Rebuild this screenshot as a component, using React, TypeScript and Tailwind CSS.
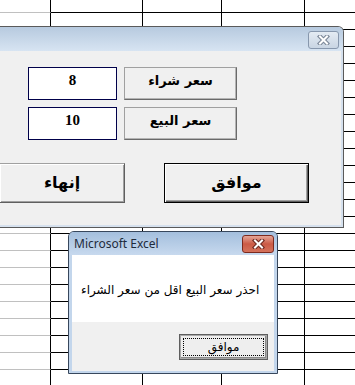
import React from "react";

const ROWS = 23;

function Sheet() {
  return (
    <div className="flex flex-col w-[355px] h-[385px] overflow-hidden bg-white">
      {Array.from({ length: ROWS }).map((_, i) => (
        <div key={i} className={i === 0 ? "flex h-[13px] shrink-0" : "flex h-[17px] shrink-0"}>
          <div className="w-[51px] border-r border-b border-r-black border-b-[#c0c0c0]" />
          <div className="w-[92px] border-r border-b border-black" />
          <div className="w-[79px] border-r border-b border-black" />
          <div className="w-[83px] border-r border-b border-black" />
          <div className="flex-1 border-b border-black" />
        </div>
      ))}
    </div>
  );
}

function XGlyph({ outline }: { outline: string }) {
  return (
    <svg width="13" height="10" viewBox="0 0 13 10">
      <path d="M3 1.5 L10 8.5 M10 1.5 L3 8.5" stroke={outline} strokeWidth="4.2" strokeLinecap="square" fill="none" />
      <path d="M3 1.5 L10 8.5 M10 1.5 L3 8.5" stroke="#ffffff" strokeWidth="2" strokeLinecap="square" fill="none" />
    </svg>
  );
}

const arabic = { fontFamily: '"DejaVu Sans", sans-serif' };

function UserForm() {
  return (
    <div className="absolute left-0 top-[26px] w-[344px] h-[202px] border-t border-r border-b border-[#5a5a5a] rounded-tr-[6px] overflow-hidden bg-[#d6e1ee] flex flex-col">
      <div className="h-[24px] shrink-0 flex justify-end items-start pt-[4px] pr-[4px] bg-linear-to-b from-[#b7cadf] to-[#d7e4f2]">
        <div className="w-[31px] h-[18px] rounded-[3px] border border-[#8797ad] bg-linear-to-b from-[#e4ebf3] to-[#c9d5e3] flex items-center justify-center">
          <XGlyph outline="#7b8798" />
        </div>
      </div>
      <div className="flex-1 bg-[#f0f0f0] mr-[2px] mb-[2px] flex flex-col pt-[16px]">
        {[
          ["8", "سعر شراء"],
          ["10", "سعر البيع"],
        ].map(([v, l], i) => (
          <div key={i} className={i === 0 ? "flex gap-[7px] pl-[28px]" : "flex gap-[7px] pl-[28px] mt-[7px]"}>
            <div
              className="w-[89px] h-[33px] bg-white border border-[#00004a] flex items-center justify-center pb-[6px] font-bold text-[15px] text-black"
              style={{ fontFamily: '"Liberation Serif", serif' }}
            >
              {v}
            </div>
            <div
              dir="rtl"
              className="w-[113px] h-[33px] border border-[#a0a0a0] border-r-[#6a6a6a] border-b-[#6a6a6a] shadow-[inset_-1px_-1px_0_#b4b4b4] flex items-center justify-center pb-[5px] font-bold text-[13px] text-black"
              style={arabic}
            >
              {l}
            </div>
          </div>
        ))}
        <div className="flex mt-[23px]">
          <div
            dir="rtl"
            className="-ml-px w-[126px] h-[40px] border border-[#a0a0a0] border-r-[#5f5f5f] border-b-[#5f5f5f] shadow-[inset_1px_1px_0_#ffffff,inset_-1px_-1px_0_#a0a0a0] flex items-center justify-center font-bold text-[16px] text-black"
            style={arabic}
          >
            إنهاء
          </div>
          <div
            dir="rtl"
            className="ml-[39px] w-[145px] h-[40px] border border-black shadow-[inset_1px_1px_0_#ffffff,inset_-1px_-1px_0_#5f5f5f,inset_-2px_-2px_0_#a0a0a0] flex items-center justify-center font-bold text-[16px] text-black"
            style={arabic}
          >
            موافق
          </div>
        </div>
      </div>
    </div>
  );
}

function MsgBox() {
  return (
    <div className="absolute left-[68px] top-[231px] w-[210px] h-[143px] border border-[#37475c] rounded-t-[6px] overflow-hidden bg-[#c3d6ec] flex flex-col">
      <div className="h-[23px] shrink-0 flex justify-between items-start bg-linear-to-b from-[#a4bfdd] to-[#c7d9ee]">
        <div
          className="pl-[5px] h-[23px] flex items-center text-[12px] text-[#1e2b3c]"
          style={{ fontFamily: '"Noto Sans", sans-serif' }}
        >
          Microsoft Excel
        </div>
        <div className="mt-[3px] mr-[3px] w-[32px] h-[18px] rounded-[3px] border border-[#7c2a1e] bg-linear-to-b from-[#e4a597] via-[#cb5a45] to-[#d4725b] flex items-center justify-center">
          <XGlyph outline="#6e2a20" />
        </div>
      </div>
      <div className="flex-1 mx-[3px] mb-[2px] flex flex-col">
        <div className="h-[67px] shrink-0 bg-white flex items-start pl-[9px] pt-[27px]">
          <span dir="rtl" className="text-[12px] leading-[16px] text-black" style={arabic}>
            احذر سعر البيع اقل من سعر الشراء
          </span>
        </div>
        <div className="flex-1 bg-[#f0f0f0] flex justify-end items-start pt-[12px] pr-[6px]">
          <div className="w-[89px] h-[26px] border border-[#5e5e5e] shadow-[inset_0_0_0_1px_#a9a9a9,inset_-2px_-2px_0_#8a8a8a] bg-[#eeeeee] p-[3px]">
            <div
              dir="rtl"
              className="w-full h-full border border-dotted border-black flex items-center justify-center text-[12px] text-black"
              style={arabic}
            >
              موافق
            </div>
          </div>
        </div>
      </div>
    </div>
  );
}

export default function App() {
  return (
    <div className="relative w-[355px] h-[385px] overflow-hidden">
      <Sheet />
      <UserForm />
      <MsgBox />
    </div>
  );
}
